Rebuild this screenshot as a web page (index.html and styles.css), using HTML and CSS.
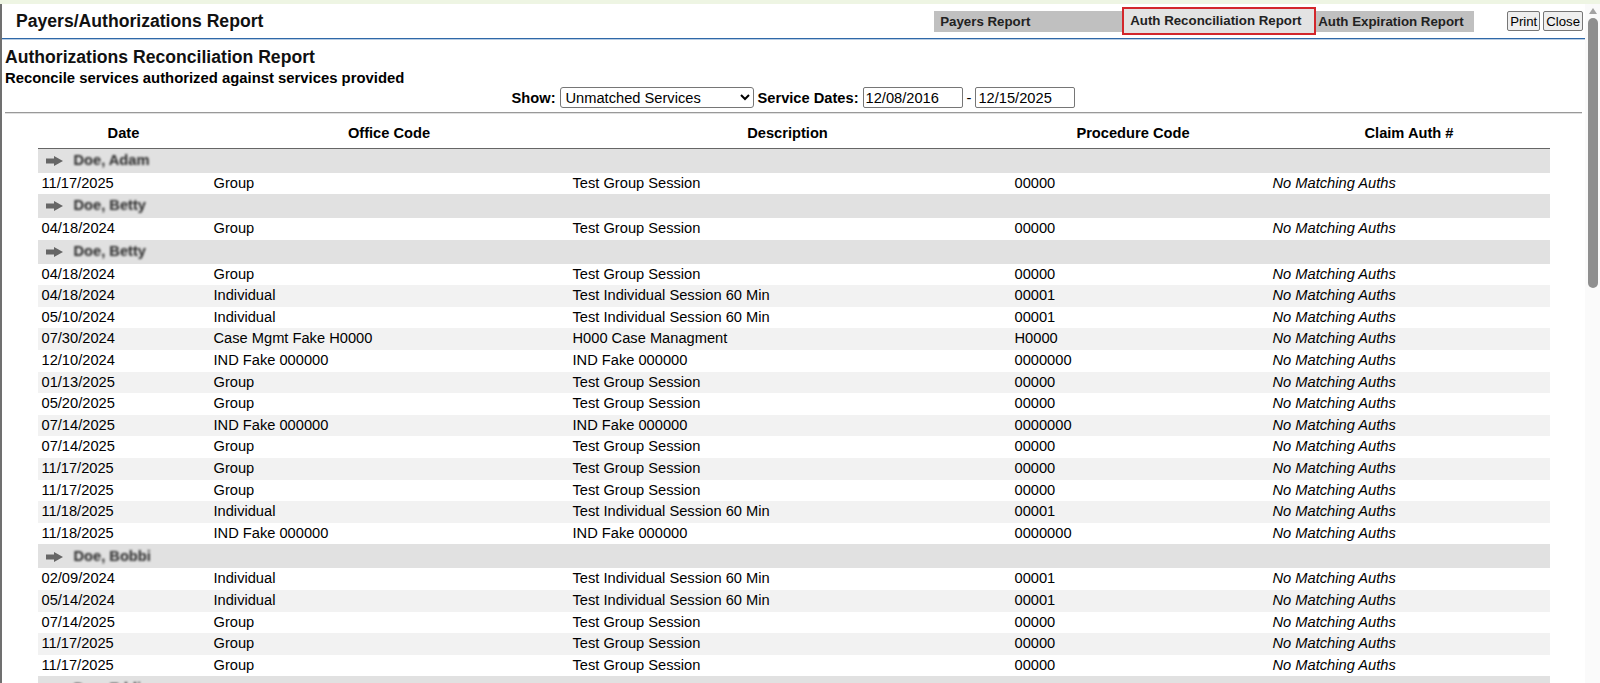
FILE: index.html
```html
<!DOCTYPE html>
<html lang="en">
<head>
    <meta charset="UTF-8">
    <title>Payers/Authorizations Report</title>
    <link rel="stylesheet" href="styles.css">
</head>
<body>
    <div class="frame">
        <div class="page">
            <div class="topbar">
                <h1 class="page-title">Payers/Authorizations Report</h1>
                <div class="topbar-right">
                    <div class="report-tabs">
                        <a class="report-tab tab-payers">Payers Report</a>
                        <a class="report-tab tab-recon active">Auth Reconciliation Report</a>
                        <a class="report-tab tab-expire">Auth Expiration Report</a>
                    </div>
                    <button class="small-btn">Print</button>
                    <button class="small-btn">Close</button>
                </div>
            </div>

            <div class="report">
                <h2 class="report-title">Authorizations Reconciliation Report</h2>
                <p class="report-sub">Reconcile services authorized against services provided</p>

                <!-- filters -->
                <div class="filters">
                    <label>Show:</label>
                    <select class="show-select">
                        <option>Unmatched Services</option>
                        <option>All Services</option>
                    </select>
                    <label>Service Dates:</label>
                    <input type="text" class="date-input" value="12/08/2016">
                    <span>-</span>
                    <input type="text" class="date-input" value="12/15/2025">
                </div>
                <div class="divider"></div>

                <table class="recon-table">
                    <colgroup>
                        <col style="width: 172px">
                        <col style="width: 359px">
                        <col style="width: 438px">
                        <col style="width: 262px">
                        <col style="width: 281px">
                    </colgroup>
                    <thead>
                        <tr>
                            <th>Date</th>
                            <th>Office Code</th>
                            <th>Description</th>
                            <th class="proc-head">Procedure Code</th>
                            <th>Claim Auth #</th>
                        </tr>
                    </thead>
                    <tbody>
                        <tr class="group-row"><td colspan="5"><svg class="arrow" width="17" height="10" viewBox="0 0 17 10"><rect x="0" y="2.5" width="9" height="5"/><polygon points="8,0 17,5 8,10"/></svg><span class="client-name">Doe, Adam</span></td></tr>
                        <tr><td>11/17/2025</td><td>Group</td><td>Test Group Session</td><td class="proc">00000</td><td class="no-match">No Matching Auths</td></tr>
                    </tbody>
                    <tbody>
                        <tr class="group-row"><td colspan="5"><svg class="arrow" width="17" height="10" viewBox="0 0 17 10"><rect x="0" y="2.5" width="9" height="5"/><polygon points="8,0 17,5 8,10"/></svg><span class="client-name">Doe, Betty</span></td></tr>
                        <tr><td>04/18/2024</td><td>Group</td><td>Test Group Session</td><td class="proc">00000</td><td class="no-match">No Matching Auths</td></tr>
                    </tbody>
                    <tbody>
                        <tr class="group-row"><td colspan="5"><svg class="arrow" width="17" height="10" viewBox="0 0 17 10"><rect x="0" y="2.5" width="9" height="5"/><polygon points="8,0 17,5 8,10"/></svg><span class="client-name">Doe, Betty</span></td></tr>
                        <tr><td>04/18/2024</td><td>Group</td><td>Test Group Session</td><td class="proc">00000</td><td class="no-match">No Matching Auths</td></tr>
                        <tr><td>04/18/2024</td><td>Individual</td><td>Test Individual Session 60 Min</td><td class="proc">00001</td><td class="no-match">No Matching Auths</td></tr>
                        <tr><td>05/10/2024</td><td>Individual</td><td>Test Individual Session 60 Min</td><td class="proc">00001</td><td class="no-match">No Matching Auths</td></tr>
                        <tr><td>07/30/2024</td><td>Case Mgmt Fake H0000</td><td>H000 Case Managment</td><td class="proc">H0000</td><td class="no-match">No Matching Auths</td></tr>
                        <tr><td>12/10/2024</td><td>IND Fake 000000</td><td>IND Fake 000000</td><td class="proc">0000000</td><td class="no-match">No Matching Auths</td></tr>
                        <tr><td>01/13/2025</td><td>Group</td><td>Test Group Session</td><td class="proc">00000</td><td class="no-match">No Matching Auths</td></tr>
                        <tr><td>05/20/2025</td><td>Group</td><td>Test Group Session</td><td class="proc">00000</td><td class="no-match">No Matching Auths</td></tr>
                        <tr><td>07/14/2025</td><td>IND Fake 000000</td><td>IND Fake 000000</td><td class="proc">0000000</td><td class="no-match">No Matching Auths</td></tr>
                        <tr><td>07/14/2025</td><td>Group</td><td>Test Group Session</td><td class="proc">00000</td><td class="no-match">No Matching Auths</td></tr>
                        <tr><td>11/17/2025</td><td>Group</td><td>Test Group Session</td><td class="proc">00000</td><td class="no-match">No Matching Auths</td></tr>
                        <tr><td>11/17/2025</td><td>Group</td><td>Test Group Session</td><td class="proc">00000</td><td class="no-match">No Matching Auths</td></tr>
                        <tr><td>11/18/2025</td><td>Individual</td><td>Test Individual Session 60 Min</td><td class="proc">00001</td><td class="no-match">No Matching Auths</td></tr>
                        <tr><td>11/18/2025</td><td>IND Fake 000000</td><td>IND Fake 000000</td><td class="proc">0000000</td><td class="no-match">No Matching Auths</td></tr>
                    </tbody>
                    <tbody>
                        <tr class="group-row"><td colspan="5"><svg class="arrow" width="17" height="10" viewBox="0 0 17 10"><rect x="0" y="2.5" width="9" height="5"/><polygon points="8,0 17,5 8,10"/></svg><span class="client-name">Doe, Bobbi</span></td></tr>
                        <tr><td>02/09/2024</td><td>Individual</td><td>Test Individual Session 60 Min</td><td class="proc">00001</td><td class="no-match">No Matching Auths</td></tr>
                        <tr><td>05/14/2024</td><td>Individual</td><td>Test Individual Session 60 Min</td><td class="proc">00001</td><td class="no-match">No Matching Auths</td></tr>
                        <tr><td>07/14/2025</td><td>Group</td><td>Test Group Session</td><td class="proc">00000</td><td class="no-match">No Matching Auths</td></tr>
                        <tr><td>11/17/2025</td><td>Group</td><td>Test Group Session</td><td class="proc">00000</td><td class="no-match">No Matching Auths</td></tr>
                        <tr><td>11/17/2025</td><td>Group</td><td>Test Group Session</td><td class="proc">00000</td><td class="no-match">No Matching Auths</td></tr>
                    </tbody>
                    <tbody>
                        <tr class="group-row"><td colspan="5"><svg class="arrow" width="17" height="10" viewBox="0 0 17 10"><rect x="0" y="2.5" width="9" height="5"/><polygon points="8,0 17,5 8,10"/></svg><span class="client-name">Doe, Eddie</span></td></tr>
                    </tbody>
                </table>
            </div>
        </div>

        <div class="scrollbar">
            <div class="scroll-up"></div>
            <div class="scroll-thumb"></div>
        </div>
    </div>
</body>
</html>
```

FILE: styles.css
```css
* {
    box-sizing: border-box;
}
body {
    margin: 0;
    padding-top: 4px;
    height: 683px;
    overflow: hidden;
    background: #eef5e3;
    font-family: "Liberation Sans", Arial, sans-serif;
    font-size: 14.67px;
    color: #000;
}
.frame {
    display: flex;
    height: 679px;
    overflow: hidden;
    background: #fff;
    border-left: 2px solid #707070;
}
.page {
    flex: 1;
    min-width: 0;
}

/* top bar */
.topbar {
    display: flex;
    align-items: center;
    justify-content: space-between;
    height: 35px;
    padding: 0 2px 0 14px;
    border-bottom: 1px solid #2f68a8;
    box-shadow: 0 1px 0 #b9cde3;
}
.page-title {
    margin: 0;
    font-size: 17.6px;
    font-weight: bold;
    color: #111;
}
.topbar-right {
    display: flex;
    align-items: center;
}
.report-tabs {
    display: flex;
    align-items: center;
    height: 21px;
    margin-right: 33px;
    background: #c0c0c0;
}
.report-tab {
    font-size: 13.3px;
    font-weight: bold;
    color: #222;
    line-height: 21px;
    padding-left: 6px;
    white-space: nowrap;
    cursor: pointer;
}
.tab-payers {
    width: 188px;
}
.report-tab.active {
    width: 194px;
    height: 28px;
    line-height: 24px;
    background: #e3e3e3;
    border: 2px solid #d3272c;
}
.tab-expire {
    width: 158px;
    padding-left: 2px;
}
.small-btn {
    height: 20px;
    padding: 0 2px;
    margin-left: 3px;
    font-family: "Liberation Sans", Arial, sans-serif;
    font-size: 13.2px;
    color: #000;
    background: #efefef;
    border: 1px solid #767676;
    border-radius: 2px;
}
.topbar-right .report-tabs + .small-btn {
    margin-left: 0;
}

/* report header */
.report {
    padding: 8px 3px 0;
}
.report-title {
    margin: 0;
    font-size: 17.6px;
    line-height: 20px;
    font-weight: bold;
    color: #111;
}
.report-sub {
    margin: 3px 0 0;
    font-size: 14.85px;
    line-height: 17px;
    font-weight: bold;
}
.filters {
    display: flex;
    justify-content: center;
    align-items: center;
    gap: 4px;
    height: 21px;
}
.filters label {
    font-weight: bold;
}
.show-select {
    width: 194px;
    height: 21px;
    padding: 0 0 0 1px;
    font-family: "Liberation Sans", Arial, sans-serif;
    font-size: 14.67px;
    color: #000;
    background: #fff;
    border: 1px solid #767676;
    border-radius: 3px;
}
.date-input {
    width: 100px;
    height: 21px;
    padding: 1px 2px;
    font-family: "Liberation Sans", Arial, sans-serif;
    font-size: 14.67px;
    color: #000;
    border: 1px solid #767676;
    border-radius: 2px;
}
.divider {
    margin-top: 4px;
    border-top: 1px solid #999;
    border-bottom: 1px solid #e0e0e0;
}

/* table */
.recon-table {
    width: 1512px;
    margin: 8px auto 0;
    table-layout: fixed;
    border-collapse: collapse;
}
.recon-table th {
    padding: 3px 4px 6px;
    line-height: 17px;
    font-weight: bold;
    text-align: center;
    border-bottom: 1px solid #666;
}
.recon-table th.proc-head {
    padding-right: 13px;
}
.recon-table td {
    padding: 2px 4px;
    line-height: 17.6px;
    white-space: nowrap;
}
.recon-table td.proc {
    padding-left: 8px;
}
.recon-table tbody tr:nth-child(odd):not(.group-row) {
    background: #f2f2f2;
}
.recon-table .no-match {
    font-style: italic;
}
.group-row td {
    height: 24px;
    padding: 0 8px;
    background: #e1e1e1;
}
.arrow {
    vertical-align: middle;
    fill: #666;
}
.client-name {
    margin-left: 11px;
    font-weight: bold;
    color: #2a2a2a;
    vertical-align: middle;
    filter: blur(1px);
}

/* fake scrollbar */
.scrollbar {
    flex: none;
    width: 15px;
    display: flex;
    flex-direction: column;
    align-items: center;
    background: #fafafa;
}
.scroll-up {
    width: 0;
    height: 0;
    margin-top: 4px;
    border-left: 4px solid transparent;
    border-right: 4px solid transparent;
    border-bottom: 6px solid #a3a3a3;
}
.scroll-thumb {
    width: 10px;
    height: 270px;
    margin-top: 4px;
    border-radius: 5px;
    background: #8f8f8f;
}
```
